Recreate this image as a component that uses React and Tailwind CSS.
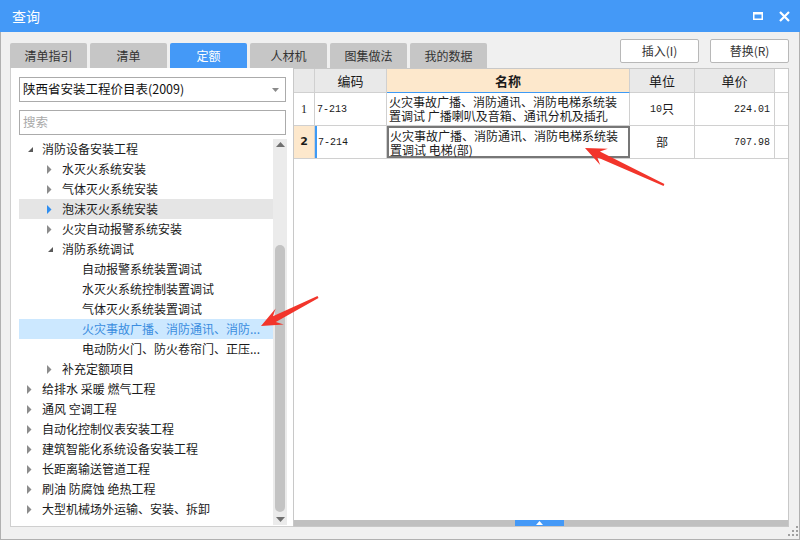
import React from "react";

const tree = [
  { level: 0, state: "open", text: "消防设备安装工程" },
  { level: 1, state: "closed", text: "水灭火系统安装" },
  { level: 1, state: "closed", text: "气体灭火系统安装" },
  { level: 1, state: "closed", text: "泡沫灭火系统安装", hover: true },
  { level: 1, state: "closed", text: "火灾自动报警系统安装" },
  { level: 1, state: "open", text: "消防系统调试" },
  { level: 2, state: "leaf", text: "自动报警系统装置调试" },
  { level: 2, state: "leaf", text: "水灭火系统控制装置调试" },
  { level: 2, state: "leaf", text: "气体灭火系统装置调试" },
  { level: 2, state: "leaf", text: "火灾事故广播、消防通讯、消防...", selected: true },
  { level: 2, state: "leaf", text: "电动防火门、防火卷帘门、正压..." },
  { level: 1, state: "closed", text: "补充定额项目" },
  { level: 0, state: "closed", text: "给排水 采暖 燃气工程" },
  { level: 0, state: "closed", text: "通风 空调工程" },
  { level: 0, state: "closed", text: "自动化控制仪表安装工程" },
  { level: 0, state: "closed", text: "建筑智能化系统设备安装工程" },
  { level: 0, state: "closed", text: "长距离输送管道工程" },
  { level: 0, state: "closed", text: "刷油 防腐蚀 绝热工程" },
  { level: 0, state: "closed", text: "大型机械场外运输、安装、拆卸" },
];

const tabs = ["清单指引", "清单", "定额", "人材机", "图集做法", "我的数据"];

// red annotation arrow, tail -> tip
function arrowPoints(tx, ty, px, py) {
  const dx = px - tx;
  const dy = py - ty;
  const len = Math.hypot(dx, dy);
  const ux = dx / len;
  const uy = dy / len;
  const nx = -uy;
  const ny = ux;
  const L = 21;
  const W = 9;
  const notch = 15;
  const w1 = 3.2;
  const w0 = 1;
  const pts = [
    [px, py],
    [px - L * ux + W * nx, py - L * uy + W * ny],
    [px - notch * ux + w1 * nx, py - notch * uy + w1 * ny],
    [tx + w0 * nx, ty + w0 * ny],
    [tx - w0 * nx, ty - w0 * ny],
    [px - notch * ux - w1 * nx, py - notch * uy - w1 * ny],
    [px - L * ux - W * nx, py - L * uy - W * ny],
  ];
  return pts.map((p) => p[0].toFixed(1) + "," + p[1].toFixed(1)).join(" ");
}

const TreeArrow = ({ state, hover }) => {
  if (state === "open") {
    return (
      <svg width="6" height="6" viewBox="0 0 6 6" className="mt-[1px]">
        <polygon points="5,0 5,5 0,5" fill="#5a5a5a" />
      </svg>
    );
  }
  if (state === "closed") {
    return (
      <svg width="5" height="9" viewBox="0 0 5 9" className="-ml-[1px]">
        <polygon points="0,0 4.5,4.5 0,9" fill={hover ? "#2f8ef0" : "#8c8c8c"} />
      </svg>
    );
  }
  return null;
};

export default function App() {
  return (
    <div className="relative w-[800px] h-[540px] flex flex-col bg-[#f0f0f0] font-['Noto_Sans_CJK_SC',sans-serif] text-[#1a1a1a] overflow-hidden">
      {/* title bar */}
      <div className="h-[32px] bg-[#4499f7] flex items-center justify-between pl-[12px] pr-[10px] shrink-0">
        <span className="text-white text-[14px] leading-none">查询</span>
        <div className="flex items-center gap-[16px]">
          <svg width="10" height="8" viewBox="0 0 10 8">
            <rect x="0.75" y="1" width="8.5" height="6.25" fill="none" stroke="#fff" strokeWidth="1.5" />
            <rect x="0" y="0" width="10" height="2.5" fill="#fff" />
          </svg>
          <svg width="11" height="11" viewBox="0 0 11 11">
            <path d="M1 1 L10 10 M10 1 L1 10" stroke="#fff" strokeWidth="2.2" />
          </svg>
        </div>
      </div>

      {/* body */}
      <div className="flex-1 flex flex-col border-x border-b border-[#b0b0b0] pl-[9px] pr-[10px] pb-[12px]">
        <div className="h-[36px] flex items-end justify-between shrink-0">
          <div className="flex gap-[3px]">
            {tabs.map((t) => (
              <div
                key={t}
                className={
                  "w-[77px] h-[25px] flex items-center justify-center text-[12px] rounded-t-[2px] " +
                  (t === "定额" ? "bg-[#4499f7] text-white" : "bg-[#c6c6c6] text-[#333]")
                }
              >
                {t}
              </div>
            ))}
          </div>
          <div className="flex gap-[11px] mb-[5px]">
            <button className="w-[79px] h-[24px] bg-white border border-[#b8b8b8] rounded-[2px] text-[12px] text-[#333]">
              插入(I)
            </button>
            <button className="w-[79px] h-[24px] bg-white border border-[#b8b8b8] rounded-[2px] text-[12px] text-[#333]">
              替换(R)
            </button>
          </div>
        </div>

        <div className="flex-1 flex">
          {/* left panel */}
          <div className="w-[283px] bg-white border-l border-b border-[#cfcfcf] flex flex-col pl-[8px] pr-[5px] pt-[9px]">
            <div className="w-[267px] h-[25px] border border-[#ababab] flex items-center justify-between pl-[3px] pr-[6px]">
              <span className="text-[12.5px] text-[#111]">陕西省安装工程价目表(2009)</span>
              <svg width="7" height="4" viewBox="0 0 7 4">
                <polygon points="0,0 7,0 3.5,4" fill="#8a8a8a" />
              </svg>
            </div>
            <div className="w-[267px] h-[25px] mt-[8px] border border-[#ababab] flex items-center pl-[3px]">
              <span className="text-[12.5px] text-[#a9a9a9]">搜索</span>
            </div>
            <div className="flex-1 flex mt-[4px]">
              <div className="w-[254px] flex flex-col">
                {tree.map((r, i) => (
                  <div
                    key={i}
                    className={
                      "h-[20px] flex items-center shrink-0 " +
                      (r.hover ? "bg-[#e5e5e5] " : "") +
                      (r.selected ? "bg-[#cce8ff] " : "")
                    }
                    style={{ paddingLeft: 9 + r.level * 20 }}
                  >
                    <div className="w-[14px] flex items-center">
                      <TreeArrow state={r.state} hover={r.hover} />
                    </div>
                    <span
                      className={
                        "text-[12px] whitespace-nowrap leading-none " +
                        (r.selected ? "text-[#3a8de0]" : "text-[#1a1a1a]")
                      }
                    >
                      {r.text}
                    </span>
                  </div>
                ))}
              </div>
              {/* vertical scrollbar */}
              <div className="w-[14px] mb-[1px] bg-[#ebebeb] flex flex-col items-center pt-[3px] pb-[3px]">
                <svg width="9" height="5" viewBox="0 0 9 5">
                  <polygon points="0,5 9,5 4.5,0" fill="#707070" />
                </svg>
                <div className="flex-1 w-full flex flex-col items-center pt-[98px] pb-[5px]">
                  <div className="w-[10px] flex-1 bg-[#c3c3c3] rounded-[5px]" />
                </div>
                <svg width="9" height="5" viewBox="0 0 9 5">
                  <polygon points="0,0 9,0 4.5,5" fill="#707070" />
                </svg>
              </div>
            </div>
          </div>

          {/* right grid */}
          <div className="flex-1 bg-white border border-[#c8c8c8] flex flex-col">
            <div className="flex h-[24px] border-b border-[#d0d0d0] text-[13px]">
              <div className="w-[21px] bg-[#e9e9e9] border-r border-[#d0d0d0]" />
              <div className="w-[72px] bg-[#e9e9e9] border-r border-[#d0d0d0] flex items-center justify-center">编码</div>
              <div className="w-[243px] bg-[#fde8cc] border-r border-[#d0d0d0] flex items-center justify-center font-bold">名称</div>
              <div className="w-[65px] bg-[#e9e9e9] border-r border-[#d0d0d0] flex items-center justify-center">单位</div>
              <div className="w-[80px] bg-[#e9e9e9] border-r border-[#d0d0d0] flex items-center justify-center">单价</div>
            </div>

            <div className="flex h-[33px] border-b border-[#d0d0d0] text-[12px]">
              <div className="w-[21px] border-r border-[#d0d0d0] flex items-center justify-center font-['Liberation_Serif',serif] text-[12px]">1</div>
              <div className="w-[72px] border-r border-[#d0d0d0] flex items-center pl-[2px] font-['Liberation_Mono',monospace] text-[10px]">7-213</div>
              <div className="w-[243px] border-r border-[#d0d0d0] border-t border-t-[#3d9af5] -mt-[1px] flex items-center pl-[2px]">
                <p className="leading-[14px]">
                  火灾事故广播、消防通讯、消防电梯系统装
                  <br />
                  置调试 广播喇叭及音箱、通讯分机及插孔
                </p>
              </div>
              <div className="w-[65px] border-r border-[#d0d0d0] flex items-center justify-center">
                <span className="font-['Liberation_Mono',monospace] text-[10px]">10</span>只
              </div>
              <div className="w-[80px] border-r border-[#d0d0d0] flex items-center justify-end pr-[4px] font-['Liberation_Mono',monospace] text-[10px]">224.01</div>
            </div>

            <div className="flex h-[33px] border-b border-[#d0d0d0] text-[12px]">
              <div className="w-[21px] bg-[#fde8cc] border-r border-[#d0d0d0] flex items-center justify-center font-bold font-['DejaVu_Sans',sans-serif] text-[11px]">2</div>
              <div className="w-[72px] border-r border-[#d0d0d0] border-l-2 border-l-[#3d9af5] flex items-center pl-[1px] font-['Liberation_Mono',monospace] text-[10px]">7-214</div>
              <div className="w-[243px] border-2 border-[#777] pt-[1px] pl-[1px]">
                <p className="leading-[14px]">
                  火灾事故广播、消防通讯、消防电梯系统装
                  <br />
                  置调试 电梯(部)
                </p>
              </div>
              <div className="w-[65px] border-r border-[#d0d0d0] flex items-center justify-center">部</div>
              <div className="w-[80px] border-r border-[#d0d0d0] flex items-center justify-end pr-[4px] font-['Liberation_Mono',monospace] text-[10px]">707.98</div>
            </div>

            <div className="flex-1" />
            <div className="h-[6px] bg-[#c0c0c0] flex justify-center">
              <div className="w-[49px] h-full bg-[#4499f7] flex items-center justify-center -ml-[3px]">
                <svg width="7" height="4" viewBox="0 0 7 4">
                  <polygon points="0,4 7,4 3.5,0" fill="#fff" />
                </svg>
              </div>
            </div>
          </div>
        </div>
      </div>

      {/* resize grip */}
      <svg className="absolute right-[2px] bottom-[4px]" width="10" height="10" viewBox="0 0 10 10">
        <rect x="8" y="0" width="2" height="2" fill="#a0a0a0" />
        <rect x="4" y="4" width="2" height="2" fill="#a0a0a0" />
        <rect x="8" y="4" width="2" height="2" fill="#a0a0a0" />
        <rect x="0" y="8" width="2" height="2" fill="#a0a0a0" />
        <rect x="4" y="8" width="2" height="2" fill="#a0a0a0" />
        <rect x="8" y="8" width="2" height="2" fill="#a0a0a0" />
      </svg>

      {/* annotation arrows */}
      <svg className="absolute inset-0 pointer-events-none" width="800" height="540" viewBox="0 0 800 540">
        <polygon points={arrowPoints(318, 297, 261, 326)} fill="#f2352b" />
        <polygon points={arrowPoints(664, 185, 585, 148)} fill="#f2352b" />
      </svg>
    </div>
  );
}
